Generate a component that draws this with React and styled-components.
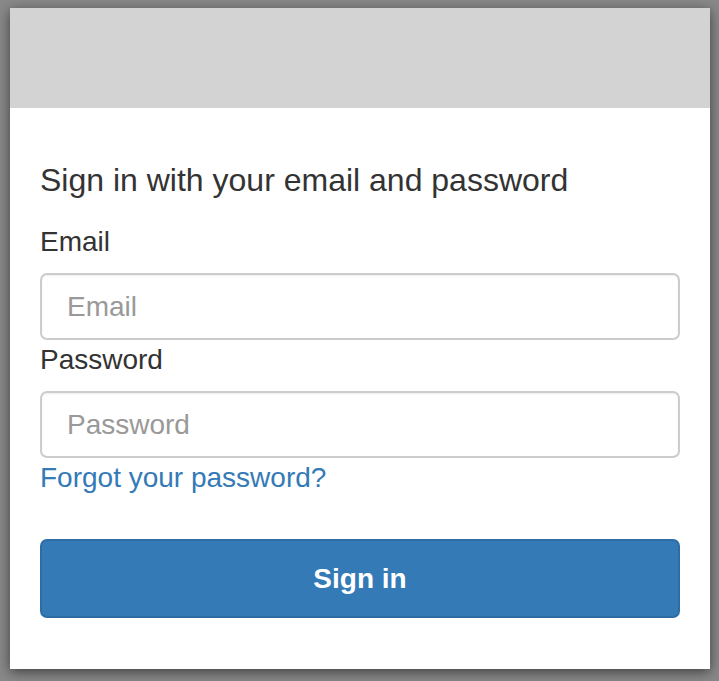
import React from "react";
import styled, { createGlobalStyle } from "styled-components";

const GlobalStyle = createGlobalStyle`
  html, body {
    margin: 0;
    padding: 0;
    background: #898989;
    font-family: "Liberation Sans", Arial, sans-serif;
  }
`;

const App = () => {
  return (
    <>
      <GlobalStyle />
      <Page>
        <Card>
          <Banner />
          <Body>
            <Title>Sign in with your email and password</Title>
            <Label htmlFor="email">Email</Label>
            <Input id="email" type="email" placeholder="Email" />
            <Label htmlFor="password">Password</Label>
            <Input id="password" type="password" placeholder="Password" />
            <ForgotLink href="#">Forgot your password?</ForgotLink>
            <SubmitButton type="button">Sign in</SubmitButton>
          </Body>
        </Card>
      </Page>
    </>
  );
};

export default App;

const Page = styled.div`
  padding: 8px 9px 12px 10px;
`;

const Card = styled.div`
  width: 700px;
  height: 661px;
  background: #fff;
  box-shadow: 0 3px 12px rgba(0, 0, 0, 0.55);
  display: flex;
  flex-direction: column;
`;

const Banner = styled.div`
  height: 100px;
  background: #d3d3d3;
`;

const Body = styled.div`
  padding: 54px 30px 0;
  display: flex;
  flex-direction: column;
`;

const Title = styled.h1`
  margin: 0 0 24px;
  font-size: 32px;
  font-weight: 400;
  line-height: 36px;
  color: #333;
`;

const Label = styled.label`
  font-size: 28px;
  line-height: 32px;
  color: #333;
  margin: 4px 0 15px;
`;

const Input = styled.input`
  box-sizing: border-box;
  height: 67px;
  width: 100%;
  padding: 0 25px;
  border: 2px solid #ccc;
  border-radius: 7px;
  font-family: inherit;
  font-size: 28px;
  color: #555;
  box-shadow: inset 0 1px 2px rgba(0, 0, 0, 0.075);
  outline: none;
  &::placeholder {
    color: #999;
  }
`;

const ForgotLink = styled.a`
  font-size: 28px;
  line-height: 32px;
  color: #337ab7;
  text-decoration: none;
  margin: 4px 0 45px;
  align-self: flex-start;
`;

const SubmitButton = styled.button`
  height: 79px;
  width: 100%;
  background: #337ab7;
  border: 2px solid #2e6da4;
  border-radius: 7px;
  color: #fff;
  font-family: inherit;
  font-size: 28px;
  font-weight: 700;
  cursor: pointer;
`;
